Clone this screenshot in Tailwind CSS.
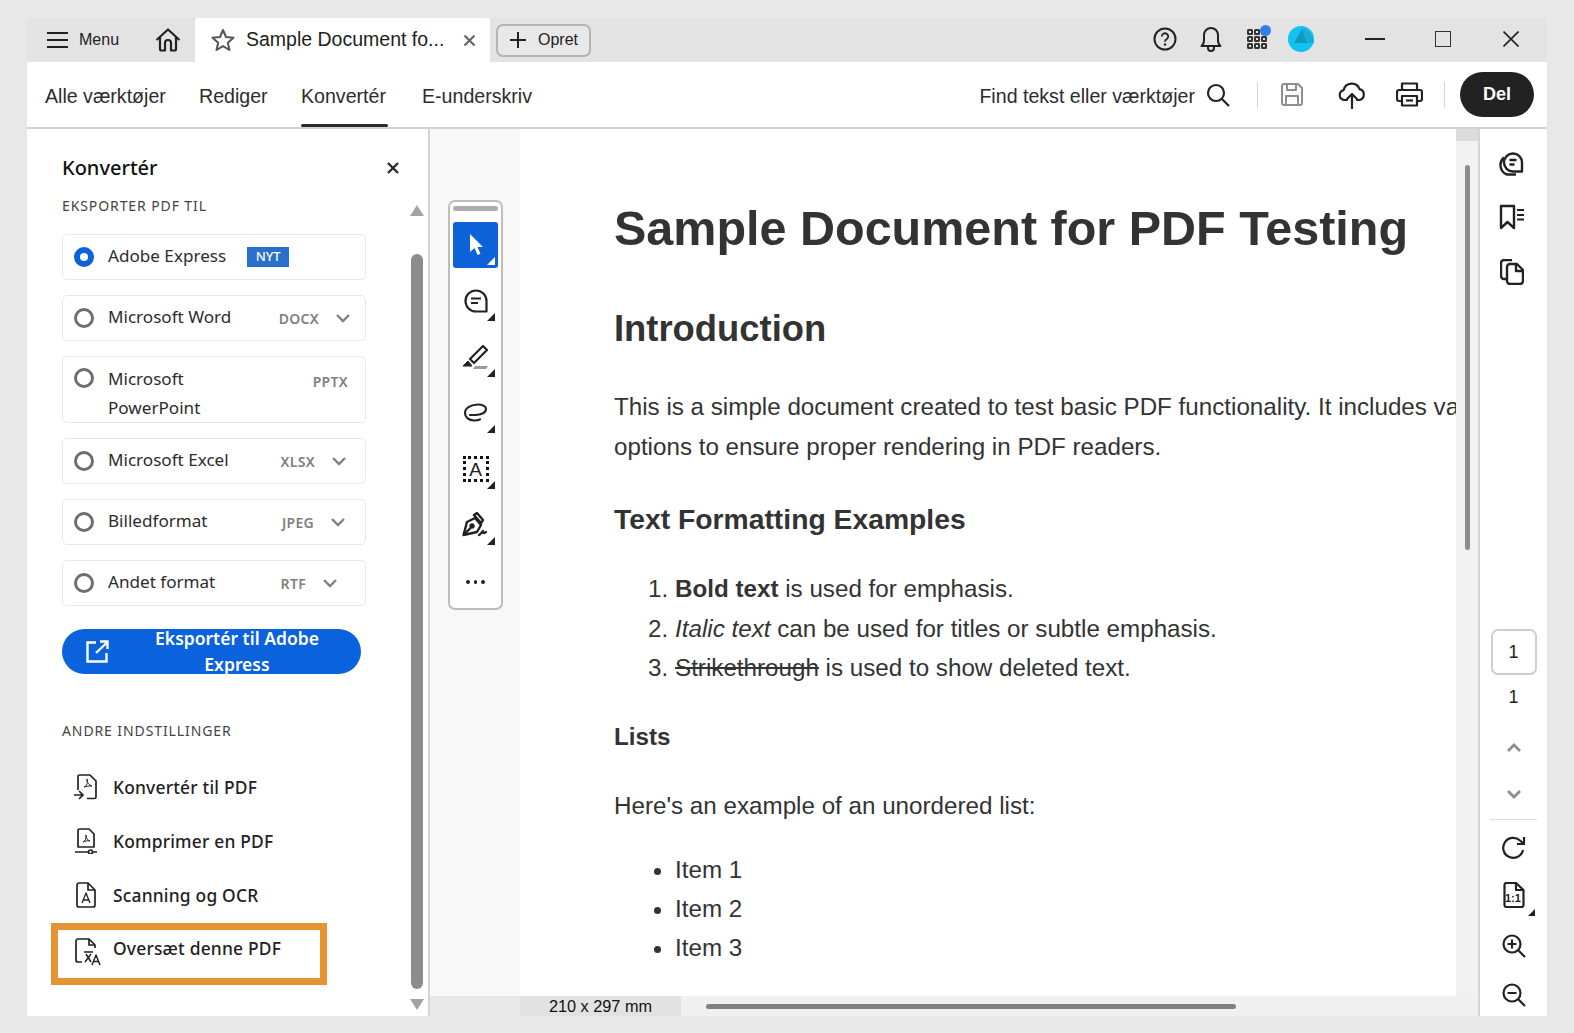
<!DOCTYPE html>
<html lang="da">
<head>
<meta charset="utf-8">
<title>Sample Document</title>
<script src="https://cdn.jsdelivr.net/npm/@tailwindcss/browser@4"></script>
</head>
<body class="bg-[#e8e8e8] h-[1033px] w-[1574px] overflow-hidden font-['Liberation_Sans',sans-serif] text-[#222]">
<div class="ml-[27px] pt-[18px] w-[1520px] h-[1016px] flex flex-col">

  <!-- title bar -->
  <div class="h-[44px] bg-[#e3e3e3] flex items-center relative shrink-0">
    <svg class="ml-[20px] w-[21px] h-[18px]" viewBox="0 0 21 18" fill="none" stroke="#222" stroke-width="2.2"><path d="M0 2h21M0 9h21M0 16h21"/></svg>
    <span class="ml-[11px] text-[16px] w-[42px]">Menu</span>
    <svg class="ml-[34px] w-[26px] h-[26px]" viewBox="0 0 26 26" fill="none" stroke="#222" stroke-width="2.2" stroke-linejoin="round"><path d="M1.500 13 13 2.500 24.500 13M5 10.500V22a1.500 1.500 0 0 0 1.500 1.500h3.500V16a3 3 0 0 1 6 0v7.500h3.500A1.500 1.500 0 0 0 21 22V10.500"/></svg>
    <div class="ml-[14px] w-[295px] h-[44px] bg-white rounded-t-[3px] flex items-center">
      <svg class="ml-[16px] w-[24px] h-[24px]" viewBox="0 0 24 24" fill="none" stroke="#555" stroke-width="2" stroke-linejoin="round"><path d="m12 2 3 7 7.500.7-5.700 5 1.700 7.300-6.500-3.900L5.500 22l1.700-7.300-5.700-5L9 9z"/></svg>
      <span class="ml-[11px] text-[19.500px] w-[200px] whitespace-nowrap">Sample Document fo...</span>
      <svg class="ml-[17px] w-[13px] h-[13px]" viewBox="0 0 13 13" stroke="#666" stroke-width="2.200"><path d="m1.500 1.500 10 10m0-10-10 10"/></svg>
    </div>
    <div class="ml-[6px] w-[95px] h-[33px] border-2 border-[#b4b4b4] rounded-[7px] bg-[#e8e8e8] flex items-center">
      <svg class="ml-[12px] w-[16px] h-[16px]" viewBox="0 0 16 16" stroke="#222" stroke-width="2"><path d="M8 0v16M0 8h16"/></svg>
      <span class="ml-[12px] text-[16px]">Opret</span>
    </div>
    <div class="ml-auto flex items-center h-full pb-[2px]">
      <svg class="w-[24px] h-[24px]" viewBox="0 0 24 24" fill="none" stroke="#222" stroke-width="2"><circle cx="12" cy="12" r="10.500"/><path d="M8.800 9.500a3.200 3.200 0 1 1 5 2.600c-1.200.8-1.800 1.300-1.800 2.600" stroke-width="1.800"/><circle cx="12" cy="17.500" r="1.200" fill="#222" stroke="none"/></svg>
      <svg class="ml-[23px] w-[22px] h-[26px]" viewBox="0 0 22 26" fill="none" stroke="#222" stroke-width="2" stroke-linejoin="round"><path d="M1.500 20c2-1.500 2.500-3 2.500-6V9a7 7 0 0 1 14 0v5c0 3 .5 4.500 2.500 6z"/><path d="M8 20.500v1.500a3 3 0 0 0 6 0v-1.500"/></svg>
      <div class="ml-[23px] relative w-[24px] h-[24px] grid grid-cols-3 gap-[1.500px] p-[2px] content-center">
        <i class="h-[5.500px] border-2 border-[#333] rounded-[1.500px]"></i><i class="h-[5.500px] border-2 border-[#333] rounded-[1.500px]"></i><i class="h-[5.500px] border-2 border-[#333] rounded-[1.500px]"></i>
        <i class="h-[5.500px] border-2 border-[#333] rounded-[1.500px]"></i><i class="h-[5.500px] border-2 border-[#333] rounded-[1.500px]"></i><i class="h-[5.500px] border-2 border-[#333] rounded-[1.500px]"></i>
        <i class="h-[5.500px] border-2 border-[#333] rounded-[1.500px]"></i><i class="h-[5.500px] border-2 border-[#333] rounded-[1.500px]"></i><i class="h-[5.500px] border-2 border-[#333] rounded-[1.500px]"></i>
        <span class="absolute right-[-2px] top-[-2px] w-[11px] h-[11px] rounded-full bg-[#2f80ed]"></span>
      </div>
      <svg class="ml-[19px] w-[26px] h-[26px]" viewBox="0 0 26 26"><circle cx="13" cy="13" r="13" fill="#12c2f2"/><path d="M14 3 6 17h20z" fill="#1398bf"/><path d="M14 3c6 0 11 6 12 14h-7z" fill="#17aed8"/></svg>
      <div class="ml-[51px] w-[20px] h-[2.500px] bg-[#222]"></div>
      <div class="ml-[50px] w-[16px] h-[16px] border-[1.500px] border-[#333]"></div>
      <svg class="ml-[52px] mr-[28px] w-[16px] h-[16px]" viewBox="0 0 16 16" stroke="#222" stroke-width="1.600"><path d="m.5.500 15 15m0-15-15 15"/></svg>
    </div>
  </div>

  <!-- toolbar -->
  <div class="h-[67px] bg-white border-b-2 border-[#d2d2d2] flex items-center shrink-0 text-[19.600px] text-[#2c2c2c]">
    <span class="ml-[18px] w-[154px] pt-[4px]">Alle værktøjer</span>
    <span class="w-[102px] pt-[4px]">Rediger</span>
    <div class="w-[121px] h-full relative flex items-center pt-[4px]">Konvertér<i class="absolute left-0 bottom-0 w-[87px] h-[3px] bg-[#2c2c2c] rounded-[2px]"></i></div>
    <span class="pt-[4px]">E-underskriv</span>
    <div class="ml-auto flex items-center">
      <span class="whitespace-nowrap pt-[4px]">Find tekst eller værktøjer</span>
      <svg class="ml-[11px] w-[24px] h-[24px]" viewBox="0 0 24 24" fill="none" stroke="#222" stroke-width="2.200"><circle cx="10" cy="10" r="8"/><path d="m16 16 7 7"/></svg>
      <div class="ml-[27px] w-px h-[26px] bg-[#d5d5d5]"></div>
      <svg class="ml-[23px] w-[22px] h-[23px]" viewBox="0 0 22 23" fill="none" stroke="#8e8e8e" stroke-width="2" stroke-linejoin="round"><path d="M1 3a2 2 0 0 1 2-2h14l4 4v15a2 2 0 0 1-2 2H3a2 2 0 0 1-2-2z"/><path d="M6 1v6h9V1M5 22v-9h12v9"/></svg>
      <svg class="ml-[35px] w-[28px] h-[28px]" viewBox="0 0 28 28" fill="none" stroke="#222" stroke-width="2.200" stroke-linejoin="round" stroke-linecap="round"><path d="M9 19H6.500a5 5 0 0 1-.8-9.900 8.200 8.200 0 0 1 15.800-1 5.600 5.600 0 0 1 0 10.900H19"/><path d="M14 27V13m-5 5 5-5 5 5"/></svg>
      <svg class="ml-[30px] w-[27px] h-[25px]" viewBox="0 0 27 25" fill="none" stroke="#222" stroke-width="2.200" stroke-linejoin="round"><path d="M6 8V1.500h15V8M6 19H3a2 2 0 0 1-2-2v-7a2 2 0 0 1 2-2h21a2 2 0 0 1 2 2v7a2 2 0 0 1-2 2h-3"/><path d="M6 14h15v9.500H6z"/><path d="M10 18.500h7"/></svg>
      <div class="ml-[21px] w-px h-[26px] bg-[#d5d5d5]"></div>
      <div class="ml-[15px] mr-[13px] w-[74px] h-[45px] rounded-full bg-[#222] text-white text-[18px] font-bold flex items-center justify-center">Del</div>
    </div>
  </div>

  <!-- body -->
  <div class="flex-1 flex min-h-0">

    <!-- side panel -->
    <div class="w-[403px] shrink-0 bg-white border-r-2 border-[#d4d4d4] flex font-['Noto_Sans',sans-serif]">
      <div class="w-[383px] pl-[35px]">
        <div class="mt-[25px] h-[28px] flex items-center w-[337px] justify-between">
          <span class="text-[20px] font-medium text-[#111]">Konvertér</span>
          <svg class="w-[12px] h-[12px]" viewBox="0 0 12 12" stroke="#222" stroke-width="2.200"><path d="m1 1 10 10m0-10L1 11"/></svg>
        </div>
        <div class="mt-[14px] h-[20px] leading-[20px] text-[14px] tracking-[0.9px] text-[#444]">EKSPORTER PDF TIL</div>
        <div class="mt-[18px] w-[304px] flex flex-col gap-[15px] text-[17.100px] text-[#2c2c2c]">
          <div class="h-[46px] border border-[#e8e8e8] rounded-[5px] flex items-center">
            <span class="ml-[11px] w-[20px] h-[20px] rounded-full border-[6px] border-[#0d62d9] bg-white"></span>
            <span class="ml-[14px] pb-[2px]">Adobe Express</span>
            <span class="ml-[21px] w-[42px] h-[20px] bg-[#2a6fc9] text-white text-[13px] font-medium flex items-center justify-center">NYT</span>
          </div>
          <div class="h-[46px] border border-[#e8e8e8] rounded-[5px] flex items-center">
            <span class="ml-[11px] w-[20px] h-[20px] rounded-full border-[3px] border-[#6e6e6e]"></span>
            <span class="ml-[14px] pb-[2px]">Microsoft Word</span>
            <span class="ml-auto text-[14px] font-semibold text-[#808080] tracking-[0.3px]">DOCX</span>
            <svg class="ml-[17px] mr-[15px] w-[14px] h-[9px]" viewBox="0 0 14 9" fill="none" stroke="#808080" stroke-width="2.400"><path d="m1 1 6 6 6-6"/></svg>
          </div>
          <div class="h-[67px] border border-[#e8e8e8] rounded-[5px] flex items-start pt-[7px]">
            <span class="ml-[11px] mt-[4px] w-[20px] h-[20px] rounded-full border-[3px] border-[#6e6e6e] shrink-0"></span>
            <span class="ml-[14px] leading-[29px] w-[130px]">Microsoft PowerPoint</span>
            <span class="ml-auto mr-[17px] mt-[7px] text-[14px] font-semibold text-[#808080] tracking-[0.3px]">PPTX</span>
          </div>
          <div class="h-[46px] border border-[#e8e8e8] rounded-[5px] flex items-center">
            <span class="ml-[11px] w-[20px] h-[20px] rounded-full border-[3px] border-[#6e6e6e]"></span>
            <span class="ml-[14px] pb-[2px]">Microsoft Excel</span>
            <span class="ml-auto text-[14px] font-semibold text-[#808080] tracking-[0.3px]">XLSX</span>
            <svg class="ml-[17px] mr-[19px] w-[14px] h-[9px]" viewBox="0 0 14 9" fill="none" stroke="#808080" stroke-width="2.400"><path d="m1 1 6 6 6-6"/></svg>
          </div>
          <div class="h-[46px] border border-[#e8e8e8] rounded-[5px] flex items-center">
            <span class="ml-[11px] w-[20px] h-[20px] rounded-full border-[3px] border-[#6e6e6e]"></span>
            <span class="ml-[14px] pb-[2px]">Billedformat</span>
            <span class="ml-auto text-[14px] font-semibold text-[#808080] tracking-[0.3px]">JPEG</span>
            <svg class="ml-[17px] mr-[20px] w-[14px] h-[9px]" viewBox="0 0 14 9" fill="none" stroke="#808080" stroke-width="2.400"><path d="m1 1 6 6 6-6"/></svg>
          </div>
          <div class="h-[46px] border border-[#e8e8e8] rounded-[5px] flex items-center">
            <span class="ml-[11px] w-[20px] h-[20px] rounded-full border-[3px] border-[#6e6e6e]"></span>
            <span class="ml-[14px] pb-[2px]">Andet format</span>
            <span class="ml-auto text-[14px] font-semibold text-[#808080] tracking-[0.3px]">RTF</span>
            <svg class="ml-[17px] mr-[28px] w-[14px] h-[9px]" viewBox="0 0 14 9" fill="none" stroke="#808080" stroke-width="2.400"><path d="m1 1 6 6 6-6"/></svg>
          </div>
        </div>
        <div class="mt-[23px] w-[299px] h-[45px] rounded-full bg-[#0a62dc] text-white flex items-center">
          <svg class="ml-[24px] w-[23px] h-[23px] shrink-0" viewBox="0 0 23 23" fill="none" stroke="#fff" stroke-width="2.400"><path d="M10 2.500H1.500v19h19V13"/><path d="M10 13 21 2.500M14 1.500h7.500V9"/></svg>
          <span class="w-[190px] ml-[33px] -mt-[2px] text-center text-[17.500px] font-semibold leading-[26px]">Eksportér til Adobe Express</span>
        </div>
        <div class="mt-[47px] h-[20px] leading-[20px] text-[14px] tracking-[0.9px] text-[#444]">ANDRE INDSTILLINGER</div>
        <div class="mt-[19px] text-[17.400px] font-medium text-[#222] tracking-[0.2px]">
          <div class="h-[54px] flex items-center">
            <svg class="ml-[12px] w-[24px] h-[26px]" viewBox="0 0 24 26" fill="none" stroke="#222" stroke-width="1.700" stroke-linejoin="round"><path d="M4 16V2.500a1.500 1.500 0 0 1 1.500-1.500H16l6 6v16a1.500 1.500 0 0 1-1.500 1.500H13"/><path d="M10 13c3-1 4-5 3-8-.5 3 2 6 5 7-2.500-.500-6 .5-8 1z" stroke-width="1"/><path d="M0 21h9m-3.500-3.500L9 21l-3.500 3.500" stroke-linecap="round"/></svg>
            <span class="ml-[15px]">Konvertér til PDF</span>
          </div>
          <div class="h-[54px] flex items-center">
            <svg class="ml-[12px] w-[24px] h-[26px]" viewBox="0 0 24 26" fill="none" stroke="#222" stroke-width="1.700" stroke-linejoin="round"><path d="M4 19V2.500A1.500 1.500 0 0 1 5.500 1H15l5 5v13z"/><path d="M9 14c2.500-1 3.500-4 3-7-.5 3 1.500 5 4 6-2-.5-5 0-7 1z" stroke-width="1"/><path d="M1 24h13m5 0h4"/><circle cx="16.500" cy="24" r="2"/></svg>
            <span class="ml-[15px]">Komprimer en PDF</span>
          </div>
          <div class="h-[54px] flex items-center">
            <svg class="ml-[12px] w-[24px] h-[26px]" viewBox="0 0 24 26" fill="none" stroke="#222" stroke-width="1.700" stroke-linejoin="round"><path d="M3 3a2 2 0 0 1 2-2h9l7 7v15a2 2 0 0 1-2 2H5a2 2 0 0 1-2-2z"/><path d="M14 1v7h7"/><path d="m8 21 4-10 4 10m-6.500-3h5" stroke-width="1.300"/></svg>
            <span class="ml-[15px]">Scanning og OCR</span>
          </div>
          <div class="h-[54px] flex items-center relative">
            <svg class="ml-[12px] w-[28px] h-[28px] shrink-0 mt-[5px]" viewBox="0 0 28 28" fill="none" stroke="#222" stroke-width="1.700" stroke-linejoin="round"><path d="M8 24H4a2 2 0 0 1-2-2V3a2 2 0 0 1 2-2h11l6 6v3"/><path d="M15 1v6h6"/><path d="M10 14h9M11 24l6-8m-5 0 5 8" stroke-width="1.500"/><path d="m18 27 4-10 4 10m-6.500-3.500h5" stroke-width="1.500"/></svg>
            <span class="ml-[11px] -mt-[1px]">Oversæt denne PDF</span>
            <div class="absolute left-[-11px] top-[1px] w-[276px] h-[62px] border-[7px] border-[#e69433]"></div>
          </div>
        </div>
      </div>
      <div class="w-[14px] flex flex-col items-center">
        <div class="mt-[76px] w-0 h-0 border-l-[7px] border-r-[7px] border-b-[11px] border-l-transparent border-r-transparent border-b-[#a3a3a3]"></div>
        <div class="mt-[38px] w-[12px] h-[735px] rounded-full bg-[#8c8c8c]"></div>
        <div class="mt-[10px] w-0 h-0 border-l-[7px] border-r-[7px] border-t-[11px] border-l-transparent border-r-transparent border-t-[#a3a3a3]"></div>
      </div>
    </div>

    <!-- document column -->
    <div class="flex-1 min-w-0 flex flex-col">
      <div class="flex-1 flex min-h-0">
        <div class="w-[90px] shrink-0 bg-[#f8f8f8] pl-[18px] pt-[71px]">
          <div class="w-[55px] h-[410px] bg-white border-2 border-[#bdbdbd] rounded-[7px] flex flex-col items-center">
            <div class="mt-[4px] w-[45px] h-[5px] rounded-full bg-[#adadad]"></div>
            <div class="mt-[11px] w-[45px] h-[46px] bg-[#0d62d9] rounded-[3px] relative flex items-center justify-center">
              <svg class="w-[18px] h-[24px]" viewBox="0 0 18 24" fill="#fff"><path d="M3 1v18l4.500-4 3 7 3-1.300-3-6.700H16z"/></svg>
              <i class="absolute right-[3px] bottom-[3px] w-0 h-0 border-l-[8px] border-b-[8px] border-l-transparent border-b-white"></i>
            </div>
            <div class="mt-[10px] w-[45px] h-[46px] relative flex items-center justify-center">
              <svg class="w-[24px] h-[24px]" viewBox="0 0 24 24" fill="none" stroke="#222" stroke-width="2.200" stroke-linejoin="round"><path d="M12 1.500A10.500 10.500 0 1 0 12 22.500h10.500V12A10.500 10.500 0 0 0 12 1.500z"/><path d="M7 9.500h10M7 14h7"/></svg>
              <i class="absolute right-[3px] bottom-[3px] w-0 h-0 border-l-[8px] border-b-[8px] border-l-transparent border-b-[#222]"></i>
            </div>
            <div class="mt-[10px] w-[45px] h-[46px] relative flex items-center justify-center">
              <svg class="w-[28px] h-[26px]" viewBox="0 0 28 26" fill="none" stroke="#222" stroke-width="2.200" stroke-linejoin="round"><path d="m8 15 4 4L25 6l-4-4z"/><path d="m1 22 5-5 4 5z" fill="#222" stroke-width="1"/><path d="M13 22h6l-2 3h-6z" fill="#999" stroke="none"/><path d="M17 25l2-3h7l-2 3z" fill="#999" stroke="none"/></svg>
              <i class="absolute right-[3px] bottom-[3px] w-0 h-0 border-l-[8px] border-b-[8px] border-l-transparent border-b-[#222]"></i>
            </div>
            <div class="mt-[10px] w-[45px] h-[46px] relative flex items-center justify-center">
              <svg class="w-[26px] h-[20px]" viewBox="0 0 26 20" fill="none" stroke="#222" stroke-width="2.200" stroke-linecap="round"><path d="M7 12h6c5-.5 10-2.500 10-6 0-3-4-4.500-8-4.500C8 1.500 2 5 2 10c0 4.500 4 7.500 9 7.500 3 0 5-.5 6-1"/></svg>
              <i class="absolute right-[3px] bottom-[3px] w-0 h-0 border-l-[8px] border-b-[8px] border-l-transparent border-b-[#222]"></i>
            </div>
            <div class="mt-[10px] w-[45px] h-[46px] relative flex items-center justify-center">
              <div class="w-[26px] h-[26px] border-[3px] border-dotted border-[#111] flex items-center justify-center font-['Liberation_Sans',sans-serif] text-[19px] leading-none">A</div>
              <i class="absolute right-[3px] bottom-[3px] w-0 h-0 border-l-[8px] border-b-[8px] border-l-transparent border-b-[#222]"></i>
            </div>
            <div class="mt-[10px] w-[45px] h-[46px] relative flex items-center justify-center">
              <svg class="w-[28px] h-[26px]" viewBox="0 0 28 26" fill="none" stroke="#222" stroke-width="2.400" stroke-linejoin="round"><path d="M1.500 23 5 10l8-4 6 7-4 7z"/><path d="m12 3 3-2 6 7-2 3zM1.500 23l7-7"/><circle cx="10" cy="14" r="1.500" fill="#222"/><path d="M17 23c2-1 3-3 4-4 0 2 1 3 3 1" stroke-linecap="round"/></svg>
              <i class="absolute right-[3px] bottom-[3px] w-0 h-0 border-l-[8px] border-b-[8px] border-l-transparent border-b-[#222]"></i>
            </div>
            <div class="mt-[32px] flex gap-[4px]"><i class="w-[3.500px] h-[3.500px] rounded-full bg-[#222]"></i><i class="w-[3.500px] h-[3.500px] rounded-full bg-[#222]"></i><i class="w-[3.500px] h-[3.500px] rounded-full bg-[#222]"></i></div>
          </div>
        </div>
        <div class="flex-1 min-w-0 bg-white overflow-hidden pl-[94px] text-[#333]">
          <h1 class="mt-[69px] text-[48.500px] leading-[60px] font-bold whitespace-nowrap">Sample Document for PDF Testing</h1>
          <h2 class="mt-[49px] text-[36.400px] leading-[44px] font-bold">Introduction</h2>
          <p class="mt-[36px] text-[24.200px] leading-[40px] whitespace-nowrap">This is a simple document created to test basic PDF functionality. It includes various formatting<br>options to ensure proper rendering in PDF readers.</p>
          <h3 class="mt-[34px] text-[28.300px] leading-[36px] font-bold">Text Formatting Examples</h3>
          <ol class="mt-[32px] ml-[61px] list-decimal text-[24.200px] leading-[39.500px]">
            <li><b>Bold text</b> is used for emphasis.</li>
            <li><i>Italic text</i> can be used for titles or subtle emphasis.</li>
            <li><s>Strikethrough</s> is used to show deleted text.</li>
          </ol>
          <h4 class="mt-[34px] text-[24.200px] leading-[30px] font-bold">Lists</h4>
          <p class="mt-[34px] text-[24.200px] leading-[40px]">Here's an example of an unordered list:</p>
          <ul class="mt-[24px] ml-[61px] list-disc text-[24.200px] leading-[39px]">
            <li>Item 1</li>
            <li>Item 2</li>
            <li>Item 3</li>
          </ul>
        </div>
        <div class="w-[24px] shrink-0 bg-[#f1f1f1] border-r-2 border-[#d4d4d4] flex flex-col items-center">
          <div class="w-full h-[12px] bg-[#dcdcdc]"></div>
          <div class="mt-[24px] w-[5px] h-[385px] rounded-full bg-[#8c8c8c]"></div>
        </div>
      </div>
      <div class="h-[20px] shrink-0 bg-[#f0f0f0] flex items-center ml-[90px] border-r-2 border-[#d4d4d4]">
        <div class="w-[161px] h-full bg-[#e2e2e2] flex items-center justify-center text-[16.300px] text-[#111]">210 x 297 mm</div>
        <div class="ml-[25px] w-[530px] h-[5px] rounded-full bg-[#808080]"></div>
      </div>
    </div>

    <!-- right rail -->
    <div class="w-[67px] shrink-0 bg-white flex flex-col items-center">
      <svg class="mt-[22px] -ml-[4px] w-[26px] h-[26px]" viewBox="0 0 26 26" fill="none" stroke="#222" stroke-width="2.400" stroke-linejoin="round"><path d="M14 2.500a9 9 0 1 0 0 18h9V11.500a9 9 0 0 0-9-9z"/><path d="M10.500 9h7M10.500 13.500h5"/><path d="M5 6.500a10 10 0 0 0 3 17h9"/></svg>
      <svg class="mt-[27px] -ml-[4px] w-[26px] h-[26px]" viewBox="0 0 26 26" fill="none" stroke="#222" stroke-width="2.400" stroke-linejoin="round"><path d="M2 2h13v22l-6.500-6L2 24z"/><path d="M18 6h7M18 11h7M18 15.500h7" stroke-width="2"/></svg>
      <svg class="mt-[29px] -ml-[4px] w-[24px] h-[26px]" viewBox="0 0 24 26" fill="none" stroke="#222" stroke-width="2.400" stroke-linejoin="round"><path d="M6 20H4a3 3 0 0 1-3-3V4a3 3 0 0 1 3-3h8"/><path d="M7 8a3 3 0 0 1 3-3h7l6 6v11a3 3 0 0 1-3 3H10a3 3 0 0 1-3-3z"/><path d="M16 5v7h7"/></svg>
      <div class="mt-[344px] w-[46px] h-[46px] border-2 border-[#cfcfcf] rounded-[7px] flex items-center justify-center text-[18px] text-[#222]">1</div>
      <div class="mt-[10px] text-[18px] leading-[24px] text-[#222]">1</div>
      <svg class="mt-[34px] w-[14px] h-[9px]" viewBox="0 0 14 9" fill="none" stroke="#8c8c8c" stroke-width="2.800"><path d="m1 8 6-6 6 6"/></svg>
      <svg class="mt-[38px] w-[14px] h-[9px]" viewBox="0 0 14 9" fill="none" stroke="#8c8c8c" stroke-width="2.800"><path d="m1 1 6 6 6-6"/></svg>
      <div class="mt-[20px] w-[47px] h-px bg-[#dcdcdc]"></div>
      <svg class="mt-[16px] w-[24px] h-[24px]" viewBox="0 0 24 24" fill="none" stroke="#222" stroke-width="2.200"><path d="M21 14a10 10 0 1 1-3-9.500L22 8"/><path d="M22 1v7h-7"/></svg>
      <div class="mt-[22px] relative w-[45px] flex justify-center">
        <svg class="w-[22px] h-[26px]" viewBox="0 0 22 26" fill="none" stroke="#222" stroke-width="2.200" stroke-linejoin="round"><path d="M1.500 3a2 2 0 0 1 2-2H13l7.500 7v15a2 2 0 0 1-2 2h-15a2 2 0 0 1-2-2z"/><path d="M13 1v7h7.500"/></svg>
        <span class="absolute left-[14px] top-[10px] text-[11px] leading-[12px] font-bold text-[#222]">1:1</span>
        <i class="absolute right-[1px] bottom-[-8px] w-0 h-0 border-l-[7px] border-b-[7px] border-l-transparent border-b-[#222]"></i>
      </div>
      <svg class="mt-[26px] w-[24px] h-[24px]" viewBox="0 0 24 24" fill="none" stroke="#222" stroke-width="2.200"><circle cx="10" cy="10" r="8.500"/><path d="m16 16 7 7M10 5.500v9M5.500 10h9"/></svg>
      <svg class="mt-[25px] w-[24px] h-[24px]" viewBox="0 0 24 24" fill="none" stroke="#222" stroke-width="2.200"><circle cx="10" cy="10" r="8.500"/><path d="m16 16 7 7M5.500 10h9"/></svg>
    </div>
  </div>
</div>
</body>
</html>
